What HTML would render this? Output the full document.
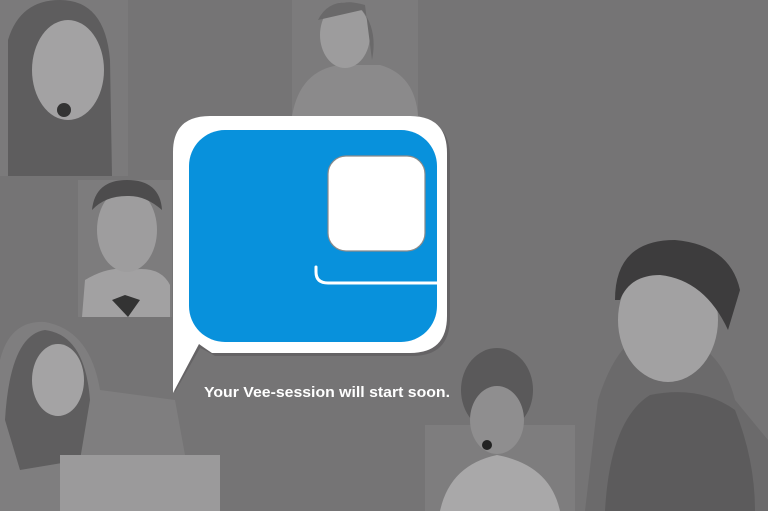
<!DOCTYPE html>
<html><head><meta charset="utf-8"><style>
html,body{margin:0;padding:0;width:768px;height:511px;overflow:hidden;background:#757475}
svg{display:block}
</style></head><body>
<svg width="768" height="511" viewBox="0 0 768 511" xmlns="http://www.w3.org/2000/svg">
<rect width="768" height="511" fill="#757475"/>
<!-- top-left woman -->
<rect x="0" y="0" width="128" height="176" fill="#7b7a7b"/>
<path d="M8 176 L8 40 Q20 0 60 0 Q105 0 110 60 L112 176 Z" fill="#5e5d5e"/>
<ellipse cx="68" cy="70" rx="36" ry="50" fill="#a3a2a3"/>
<circle cx="64" cy="110" r="7" fill="#333"/>
<!-- top middle woman -->
<rect x="292" y="0" width="126" height="116" fill="#7c7b7c"/>
<path d="M292 116 Q300 70 340 65 L380 65 Q415 75 418 116 Z" fill="#8b8a8b"/>
<ellipse cx="345" cy="35" rx="25" ry="33" fill="#9d9c9d"/>
<path d="M318 20 Q330 -5 365 5 L372 60 Q378 30 362 10 Z" fill="#6a696a"/>
<!-- man -->
<rect x="78" y="180" width="94" height="137" fill="#7d7c7d"/>
<path d="M82 317 L85 280 Q110 265 130 270 Q160 265 170 285 L170 317 Z" fill="#a2a1a2"/>
<ellipse cx="127" cy="230" rx="30" ry="42" fill="#9e9d9e"/>
<path d="M92 210 Q95 180 127 180 Q160 180 162 210 Q145 195 127 196 Q105 196 92 210Z" fill="#4d4c4d"/>
<path d="M112 300 L125 295 L140 300 L128 317 Z" fill="#333"/>
<!-- bottom-left woman -->
<path d="M0 511 L0 360 Q10 320 45 322 Q90 330 100 390 L175 400 L185 455 L220 458 L220 511 Z" fill="#7f7e7f"/>
<path d="M5 420 Q10 335 45 330 Q85 335 90 400 L80 460 L20 470 Z" fill="#5f5e5f"/>
<ellipse cx="58" cy="380" rx="26" ry="36" fill="#a4a3a4"/>
<rect x="60" y="455" width="160" height="56" fill="#9b9a9b"/>
<!-- bottom middle man -->
<rect x="425" y="425" width="150" height="86" fill="#7e7d7e"/>
<ellipse cx="497" cy="390" rx="36" ry="42" fill="#5a595a"/>
<ellipse cx="497" cy="420" rx="27" ry="34" fill="#8f8e8f"/>
<path d="M440 511 Q450 465 497 455 Q550 465 560 511 Z" fill="#a9a8a9"/>
<circle cx="487" cy="445" r="5" fill="#222"/>
<!-- right woman -->
<path d="M585 511 L598 400 Q620 330 660 330 Q720 340 735 400 L768 440 L768 511 Z" fill="#6b6a6b"/>
<path d="M605 511 Q610 420 650 395 Q700 385 735 410 Q755 460 755 511 Z" fill="#5c5b5c"/>
<ellipse cx="668" cy="320" rx="50" ry="62" fill="#a2a1a2"/>
<path d="M615 300 Q615 240 675 240 Q730 245 740 290 L728 330 Q705 280 660 275 Q630 275 620 300Z" fill="#3d3c3d"/>
<!-- logo bubble -->
<g>
<path d="M212 119 L412 119 Q450 119 450 157 L450 318 Q450 356 412 356 L215 356 Q205 350 200 348 L175 392 L175 155 Q175 119 212 119 Z" fill="#5a595a" opacity="0.6"/>
<path d="M210 116 L410 116 Q447 116 447 153 L447 316 Q447 353 410 353 L212 353 Q203 347 199 344 L173 393 L173 152 Q173 116 210 116 Z" fill="#fff"/>
<rect x="189" y="130" width="248" height="212" rx="36" fill="#0891dc"/>
<rect x="328" y="156" width="97" height="95" rx="18" fill="#fff" stroke="#8a8a8a" stroke-width="1.2"/>
<path d="M316 267 L316 272 Q316 283 328 283 L437 283" fill="none" stroke="#fff" stroke-width="3" stroke-linecap="round"/>
</g>
<text x="204" y="397" font-family="Liberation Sans, sans-serif" font-weight="bold" font-size="14.3" fill="#fff" textLength="246" lengthAdjust="spacingAndGlyphs">Your Vee-session will start soon.</text>
</svg>
</body></html>
